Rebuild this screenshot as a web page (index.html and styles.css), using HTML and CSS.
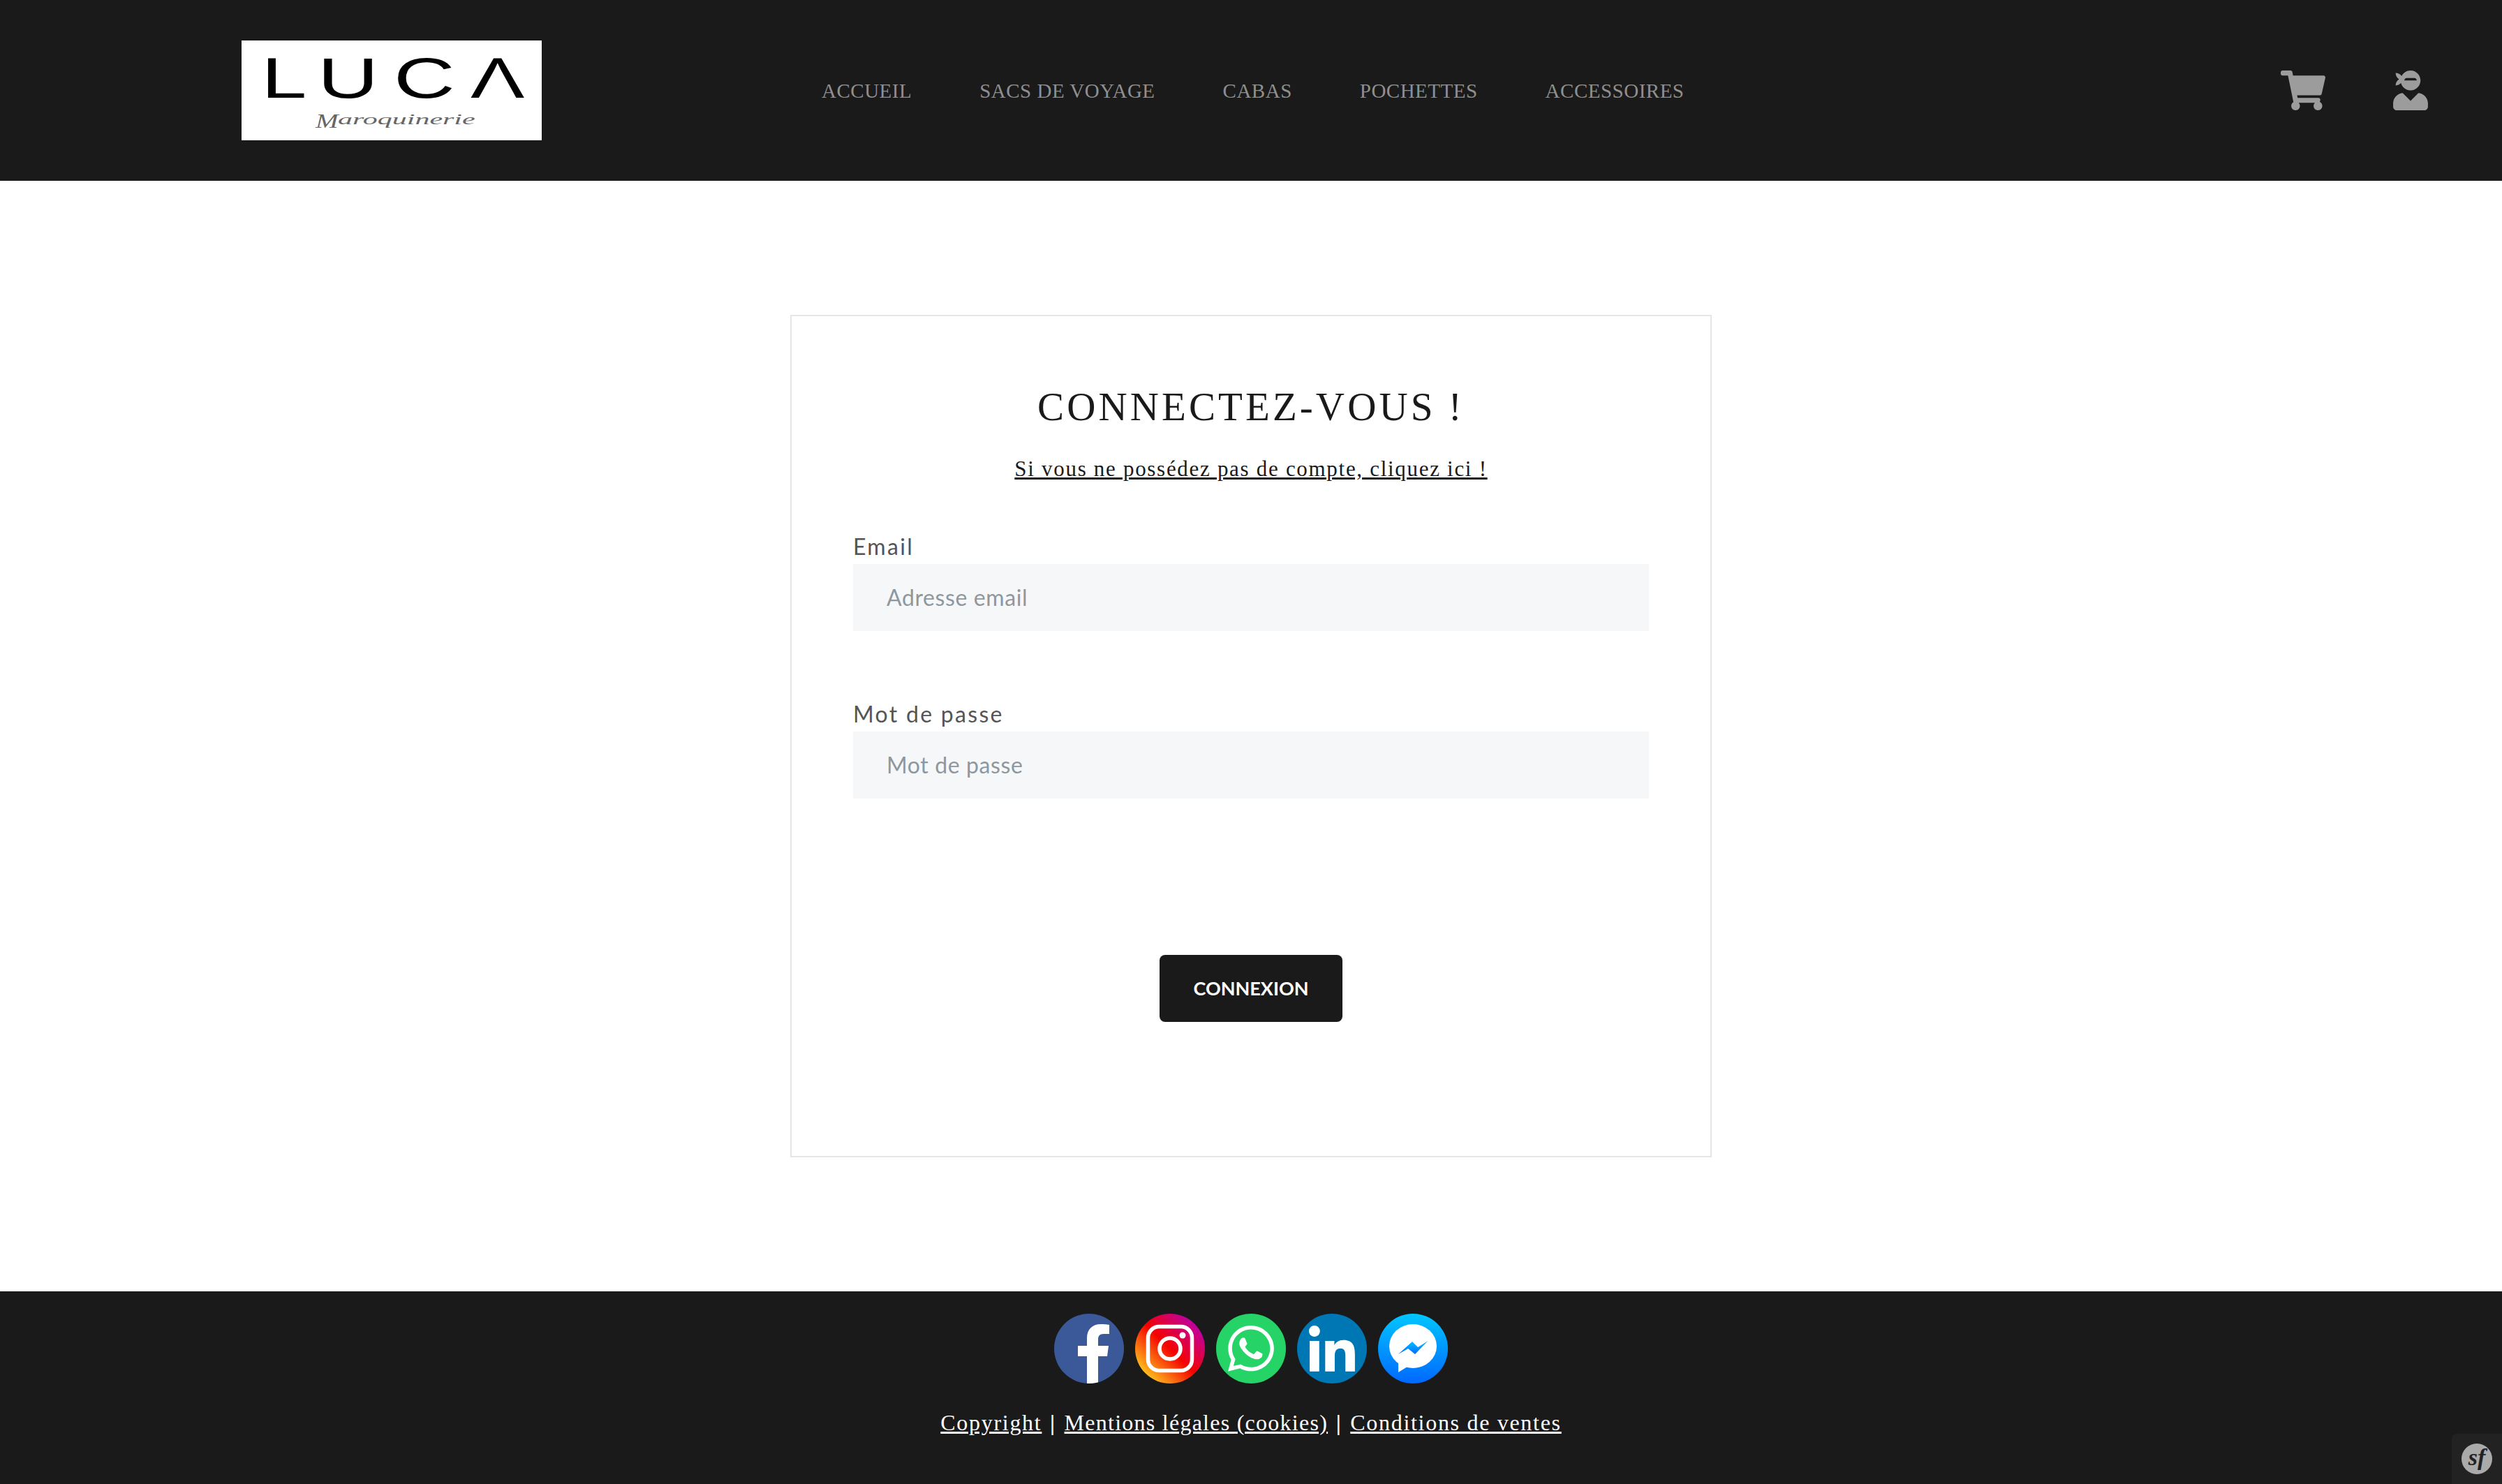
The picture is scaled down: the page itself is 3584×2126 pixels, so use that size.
FILE: index.html
```html
<!DOCTYPE html>
<html lang="fr">
<head>
    <meta charset="UTF-8">
    <meta name="viewport" content="width=device-width, initial-scale=1.0">
    <title>Connexion - Luca Maroquinerie</title>
    <link rel="stylesheet" href="styles.css">
</head>
<body>
    <header class="header">
        <a href="#" class="logo">
            <svg viewBox="0 0 430 143" width="430" height="143">
                <rect width="430" height="143" fill="#fff"/>
                <g class="logo-big">
                    <text transform="translate(28.500 82) scale(1.44 1)">L</text>
                    <text transform="translate(109 82) scale(1.49 1)">U</text>
                    <text transform="translate(218 82) scale(1.5 1)">C</text>
                    <text transform="translate(328 82) scale(1.43 1)">Λ</text>
                </g>
                <text class="logo-script-cap" transform="translate(106 125) scale(1.35 1)">M</text>
                <text class="logo-script" transform="translate(138 120) scale(2.1 1)">aroquinerie</text>
            </svg>
        </a>
        <nav class="nav">
            <a href="#">ACCUEIL</a>
            <a href="#">SACS DE VOYAGE</a>
            <a href="#">CABAS</a>
            <a href="#">POCHETTES</a>
            <a href="#">ACCESSOIRES</a>
        </nav>
        <div class="header-icons">
            <a href="#">
                <svg viewBox="0 0 576 512" width="64" height="57"><path d="M528.12 301.319l47.273-208C578.806 78.301 567.391 64 551.99 64H159.208l-9.166-44.81C147.758 8.021 137.93 0 126.529 0H24C10.745 0 0 10.745 0 24v16c0 13.255 10.745 24 24 24h69.883l70.248 343.435C147.325 417.1 136 435.222 136 456c0 30.928 25.072 56 56 56s56-25.072 56-56c0-15.674-6.447-29.835-16.824-40h209.647C430.447 426.165 424 440.326 424 456c0 30.928 25.072 56 56 56s56-25.072 56-56c0-22.172-12.888-41.332-31.579-50.405l5.517-24.276c3.413-15.018-8.002-29.319-23.403-29.319H218.117l-6.545-32h293.145c11.206 0 20.92-7.754 23.403-18.681z"/></svg>
            </a>
            <a href="#">
                <svg viewBox="0 0 448 512" width="50" height="57"><path d="M325.4 289.2L224 390.6 122.6 289.2C54 295.3 0 352.2 0 422.4V464c0 26.5 21.5 48 48 48h352c26.5 0 48-21.5 48-48v-41.6c0-70.2-54-127.1-122.6-133.2zM32 192c27.3 0 51.8-11.5 69.2-29.7 15.1 53.9 64 93.7 122.8 93.7 70.7 0 128-57.3 128-128S294.7 0 224 0c-50.4 0-93.6 29.4-114.5 71.8C92.1 47.8 64 32 32 32c0 33.4 17.1 62.8 43.1 80-26 17.2-43.1 46.6-43.1 80zm144-96h96c17.7 0 32 14.3 32 32H144c0-17.7 14.3-32 32-32z"/></svg>
            </a>
        </div>
    </header>

    <main class="main">
        <div class="card">
            <h1>CONNECTEZ-VOUS !</h1>
            <a href="#" class="signup-link">Si vous ne possédez pas de compte, cliquez ici !</a>
            <form class="login-form">
                <label for="email">Email</label>
                <input type="email" id="email" name="email" placeholder="Adresse email">

                <label for="password" class="label-second">Mot de passe</label>
                <input type="password" id="password" name="password" placeholder="Mot de passe">

                <button type="submit" class="btn">CONNEXION</button>
            </form>
        </div>
    </main>

    <footer class="footer">
        <div class="socials">
            <svg viewBox="0 0 100 100" width="100" height="100">
                <clipPath id="roundClip"><circle cx="50" cy="50" r="50"/></clipPath>
                <circle cx="50" cy="50" r="50" fill="#3b5998"/>
                <path clip-path="url(#roundClip)" fill="#fff" d="M47 100V61H34V46H47V35C47 22 55 15 67 15C72 15 77 15.5 79 16V29H71C65 29 63 32 63 37V46H78L76 61H63V100Z"/>
            </svg>
            <svg viewBox="0 0 100 100" width="100" height="100">
                <defs>
                    <linearGradient id="instaGrad" x1="0.1" y1="0.9" x2="0.9" y2="0.1">
                        <stop offset="0" stop-color="#ffd521"/>
                        <stop offset="0.5" stop-color="#f50000"/>
                        <stop offset="1" stop-color="#b900b4"/>
                    </linearGradient>
                </defs>
                <circle cx="50" cy="50" r="50" fill="url(#instaGrad)"/>
                <rect x="18.5" y="18.500" width="63" height="63" rx="16" fill="none" stroke="#fff" stroke-width="5.500"/>
                <circle cx="50" cy="50" r="15" fill="none" stroke="#fff" stroke-width="5.500"/>
                <circle cx="68" cy="31" r="4.500" fill="#fff"/>
            </svg>
            <svg viewBox="0 0 100 100" width="100" height="100">
                <circle cx="50" cy="50" r="50" fill="#25d366"/>
                <path transform="translate(17 12.300) scale(0.147)" fill="#fff" d="M380.9 97.1C339 55.1 283.2 32 223.9 32c-122.4 0-222 99.6-222 222 0 39.1 10.2 77.3 29.6 111L0 480l117.7-30.9c32.4 17.7 68.9 27 106.1 27h.1c122.3 0 224.1-99.6 224.1-222 0-59.3-25.2-115-67.1-157zm-157 341.6c-33.2 0-65.7-8.9-94-25.7l-6.7-4-69.8 18.3L72 359.2l-4.4-7c-18.5-29.4-28.2-63.3-28.2-98.2 0-101.7 82.8-184.5 184.6-184.5 49.3 0 95.6 19.2 130.4 54.1 34.8 34.9 56.2 81.2 56.1 130.5 0 101.8-84.9 184.6-186.6 184.6zm101.2-138.2c-5.5-2.8-32.8-16.2-37.9-18-5.1-1.9-8.8-2.8-12.5 2.8-3.7 5.6-14.3 18-17.6 21.8-3.2 3.7-6.5 4.2-12 1.4-32.6-16.3-54-29.1-75.5-66-5.7-9.8 5.7-9.1 16.3-30.3 1.8-3.7.9-6.9-.5-9.7-1.4-2.8-12.5-30.1-17.1-41.2-4.5-10.8-9.1-9.3-12.5-9.5-3.2-.2-6.9-.2-10.6-.2-3.7 0-9.7 1.4-14.8 6.9-5.1 5.6-19.4 19-19.4 46.3 0 27.3 19.9 53.7 22.6 57.4 2.8 3.7 39.1 59.7 94.8 83.8 35.2 15.2 49 16.5 66.6 13.9 10.7-1.6 32.8-13.4 37.4-26.4 4.6-13 4.6-24.1 3.2-26.4-1.3-2.5-5-3.9-10.5-6.6z"/>
            </svg>
            <svg viewBox="0 0 100 100" width="100" height="100">
                <circle cx="50" cy="50" r="50" fill="#0077b5"/>
                <path transform="translate(17 17) scale(0.147)" fill="#fff" d="M100.28 448H7.4V148.9h92.88zM53.79 108.1C24.09 108.1 0 83.5 0 53.8a53.79 53.79 0 0 1 107.58 0c0 29.7-24.1 54.3-53.79 54.3zM447.9 448h-92.68V302.4c0-34.7-.7-79.2-48.29-79.2-48.29 0-55.69 37.7-55.69 76.7V448h-92.78V148.9h89.08v40.8h1.3c12.4-23.5 42.69-48.3 87.88-48.3 94 0 111.28 61.9 111.28 142.3V448z"/>
            </svg>
            <svg viewBox="0 0 100 100" width="100" height="100">
                <defs>
                    <linearGradient id="messGrad" x1="0" y1="0" x2="0" y2="1">
                        <stop offset="0" stop-color="#00c6ff"/>
                        <stop offset="1" stop-color="#0068ff"/>
                    </linearGradient>
                </defs>
                <circle cx="50" cy="50" r="50" fill="url(#messGrad)"/>
                <ellipse cx="50" cy="46.500" rx="34" ry="31.500" fill="#fff"/>
                <path fill="#fff" d="M29 70V84L42 76Z"/>
                <path fill="url(#messGrad)" d="M29 58L49 40L57 48L71.500 39L53 58L43 50Z"/>
            </svg>
        </div>
        <p class="footer-links">
            <a href="#">Copyright</a> <span class="sep">|</span> <a href="#" class="link-tight">Mentions légales (cookies)</a> <span class="sep">|</span> <a href="#">Conditions de ventes</a>
        </p>
    </footer>

    <div class="sf-toolbar"><span class="sf-badge">sf</span></div>
</body>
</html>
```

FILE: styles.css
```css
body {
    margin: 0;
    padding: 0;
    font-family: 'Lato', sans-serif;
    background-color: #fff;
    color: #1a1a1a;
}
a {
    color: inherit;
}

.header {
    display: flex;
    align-items: center;
    height: 259px;
    padding: 0 106px 0 346px;
    background-color: #1a1a1a;
}
.logo {
    display: block;
    height: 143px;
}
.logo-big text {
    font-family: 'Liberation Sans', sans-serif;
    font-size: 81px;
    fill: #000;
}
.logo-script {
    font-family: 'Liberation Serif', serif;
    font-style: italic;
    font-size: 20px;
    fill: #666;
}
.logo-script-cap {
    font-family: 'Liberation Serif', serif;
    font-style: italic;
    font-size: 29px;
    fill: #666;
}
.nav {
    display: flex;
    gap: 97px;
    margin-left: 401px;
    padding-top: 1px;
    font-family: 'Liberation Serif', serif;
    font-size: 29px;
    letter-spacing: 0.5px;
}
.nav a {
    color: #8f8f8f;
    text-decoration: none;
}
.header-icons {
    display: flex;
    align-items: center;
    gap: 97px;
    margin-left: auto;
}
.header-icons a {
    display: block;
    height: 57px;
}
.header-icons svg {
    display: block;
    fill: #9c9c9c;
}

.main {
    display: flex;
    justify-content: center;
    padding: 192px 0;
}
.card {
    box-sizing: border-box;
    width: 1320px;
    height: 1207px;
    padding: 90px 88px 0;
    border: 2px solid #e5e5e5;
    text-align: center;
}
h1 {
    margin: 0 0 25px;
    font-family: 'Liberation Serif', serif;
    font-size: 57px;
    font-weight: 400;
    line-height: 80px;
    letter-spacing: 4.1px;
    color: #1a1a1a;
}
.signup-link {
    display: block;
    font-family: 'Liberation Serif', serif;
    font-size: 31px;
    line-height: 48px;
    letter-spacing: 1.7px;
}
.login-form {
    margin-top: 64px;
    text-align: left;
}
label {
    display: block;
    font-size: 32px;
    line-height: 46px;
    padding-bottom: 2px;
    letter-spacing: 2.3px;
    color: #555;
}
.label-second {
    margin-top: 96px;
}
input {
    display: block;
    box-sizing: border-box;
    width: 100%;
    height: 96px;
    padding: 0 48px 2px;
    border: none;
    background-color: #f6f7f9;
    font-family: 'Lato', sans-serif;
    font-size: 32px;
    letter-spacing: 0.6px;
}
input::placeholder {
    color: #8f979e;
    opacity: 1;
}
.btn {
    display: block;
    width: 262px;
    height: 96px;
    margin: 224px auto 0;
    padding: 0 0 2px;
    border: none;
    border-radius: 8px;
    background-color: #1a1a1a;
    color: #fff;
    font-family: 'Lato', sans-serif;
    font-size: 27px;
    font-weight: 700;
}

.footer {
    box-sizing: border-box;
    height: 276px;
    padding-top: 32px;
    background-color: #1a1a1a;
    text-align: center;
}
.socials {
    display: flex;
    justify-content: center;
    gap: 16px;
}
.socials svg {
    display: block;
}
.footer-links {
    margin: 32px 0 0;
    font-family: 'Liberation Serif', serif;
    font-size: 32px;
    line-height: 48px;
    letter-spacing: 1.7px;
    color: #fff;
}
.link-tight {
    letter-spacing: 1.26px;
}
.sep {
    margin: 0 2px;
    font-weight: 700;
}

.sf-toolbar {
    position: fixed;
    right: 0;
    bottom: 0;
    display: flex;
    align-items: center;
    justify-content: center;
    box-sizing: border-box;
    width: 72px;
    height: 72px;
    border-top-left-radius: 8px;
    background-color: #222;
}
.sf-badge {
    width: 44px;
    height: 44px;
    border-radius: 50%;
    background-color: #aaa;
    color: #222;
    font-family: 'Liberation Serif', serif;
    font-style: italic;
    font-weight: 700;
    font-size: 34px;
    line-height: 40px;
    text-align: center;
}
```
